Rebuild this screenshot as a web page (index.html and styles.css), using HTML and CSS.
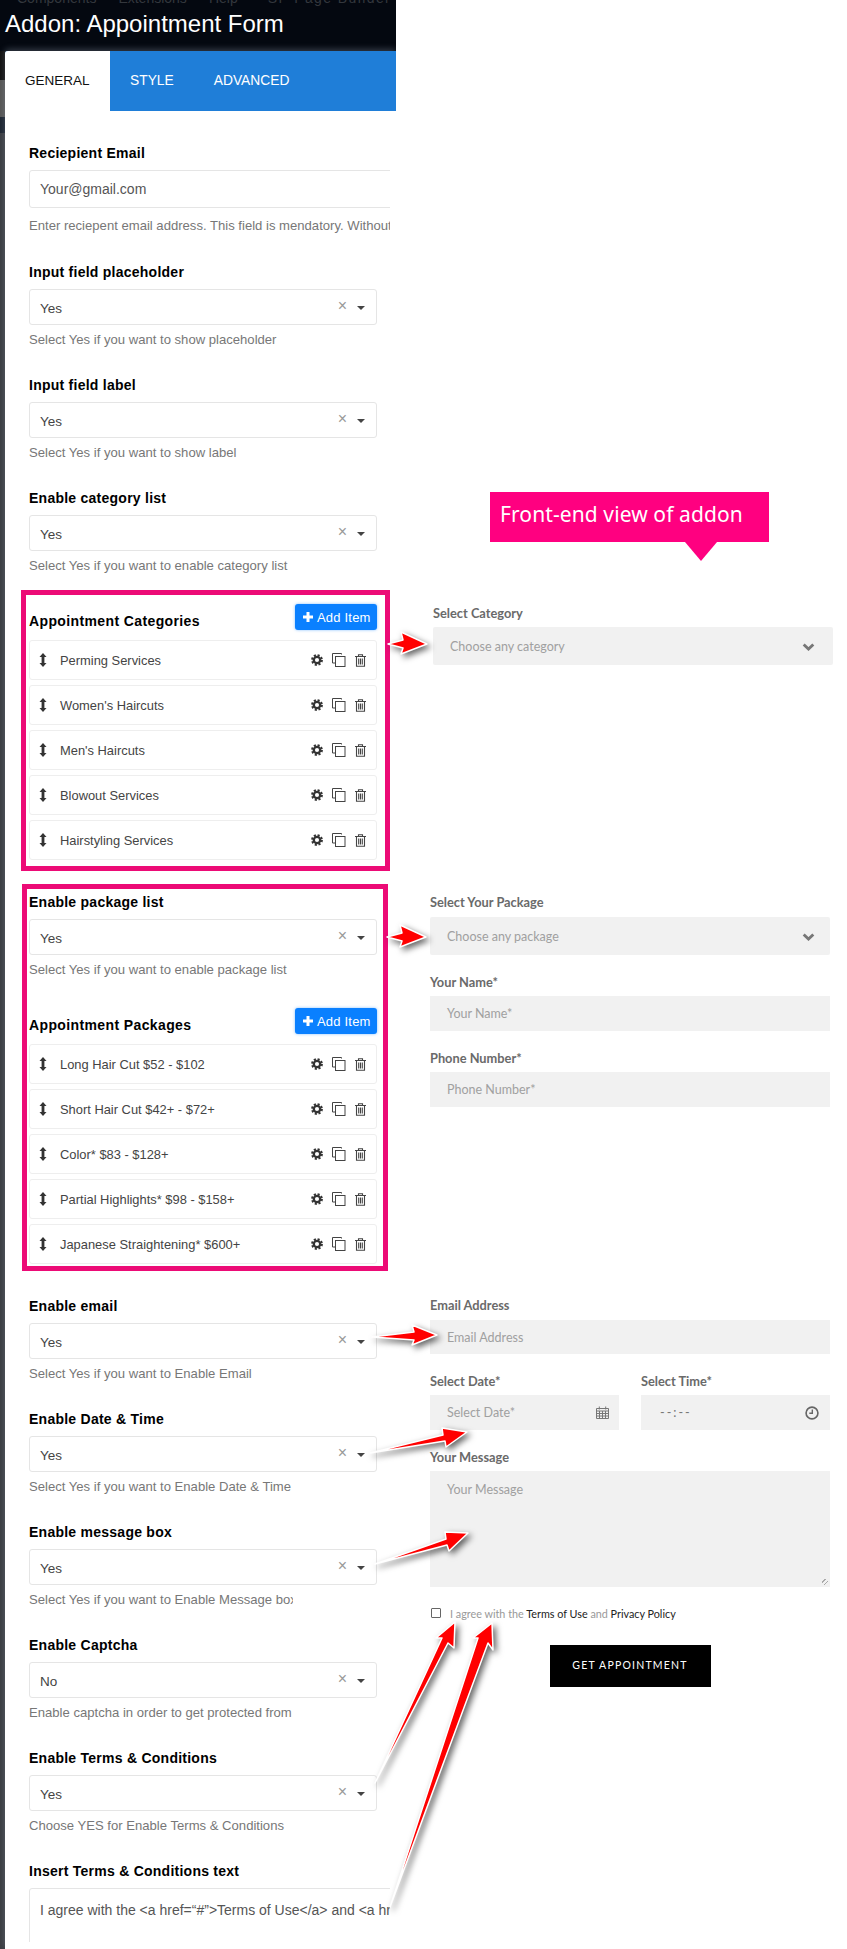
FILE: index.html
```html
<!DOCTYPE html>
<html lang="en">
<head>
<meta charset="utf-8">
<title>Addon: Appointment Form</title>
<link rel="stylesheet" href="styles.css">
</head>
<body>
<svg class="defs" width="0" height="0" aria-hidden="true">
  <symbol id="i-drag" viewBox="0 0 8 14"><path d="M4 0 7.500 4H5.400v6H7.500L4 14 .5 10H2.600V4H.5Z" fill="#333"/></symbol>
  <symbol id="i-gear" viewBox="0 0 12 12"><circle cx="6" cy="6" r="3.200" fill="none" stroke="#333" stroke-width="2.300"/><circle cx="6" cy="6" r="4.900" fill="none" stroke="#333" stroke-width="2" stroke-dasharray="2.100 1.750"/></symbol>
  <symbol id="i-copy" viewBox="0 0 14 14"><path d="M9.500 1.500V.5H.5v9.500h2.500" fill="none" stroke="#444"/><rect x="3.500" y="3.500" width="9.500" height="10" fill="#fff" stroke="#444"/></symbol>
  <symbol id="i-trash" viewBox="0 0 11 13"><path d="M0 2.500h11M3.500 2.500V.7h4v1.800M1.500 2.500v9.800h8V2.500M3.700 4.500v6M5.500 4.500v6M7.300 4.500v6" fill="none" stroke="#444" stroke-width="1.100"/></symbol>
  <symbol id="i-plus" viewBox="0 0 10 10"><path d="M3.500 0h3v3.500H10v3H6.500V10h-3V6.500H0v-3h3.500Z" fill="#fff"/></symbol>
  <symbol id="i-chev" viewBox="0 0 11 7"><path d="M1.300 1.300 5.500 5.300 9.700 1.300" fill="none" stroke="#777" stroke-width="2.500"/></symbol>
  <symbol id="i-cal" viewBox="0 0 13 13"><path d="M.5 2.500h12v10H.5ZM.5 5h12M3.500 5v7.500M6.500 5v7.500M9.500 5v7.500M.5 7.500h12M.5 10h12M3.300 .5v3M9.700 .5v3" fill="none" stroke="#777"/></symbol>
  <symbol id="i-clock" viewBox="0 0 13 13"><circle cx="6.500" cy="6.500" r="5.500" fill="none" stroke="#666" stroke-width="1.500"/><path d="M6.800 3.200v3.600H4" fill="none" stroke="#666" stroke-width="1.300"/></symbol>
</svg>

<div class="page">
  <div class="panel">
    <header class="topbar">
      <nav class="topnav"><span>Components</span><span>Extensions</span><span>Help</span><span class="topnav-last">SP Page Builder</span></nav>
      <h1 class="title">Addon: Appointment Form</h1>
    </header>
    <div class="card">
      <div class="tabs">
        <span class="tab tab-active">GENERAL</span>
        <span class="tab">STYLE</span>
        <span class="tab">ADVANCED</span>
      </div>
      <div class="form">
        <div class="field">
          <div class="label">Reciepient Email</div>
          <div class="text-input">Your@gmail.com</div>
          <div class="help help-wide">Enter reciepent email address. This field is mendatory. Without this field the form will not work</div>
        </div>
        <div class="field">
          <div class="label">Input field placeholder</div>
          <div class="select"><span class="select-value">Yes</span><span class="clear">×</span><span class="caret"></span></div>
          <div class="help">Select Yes if you want to show placeholder</div>
        </div>
        <div class="field">
          <div class="label">Input field label</div>
          <div class="select"><span class="select-value">Yes</span><span class="clear">×</span><span class="caret"></span></div>
          <div class="help">Select Yes if you want to show label</div>
        </div>
        <div class="field field-last">
          <div class="label">Enable category list</div>
          <div class="select"><span class="select-value">Yes</span><span class="clear">×</span><span class="caret"></span></div>
          <div class="help">Select Yes if you want to enable category list</div>
        </div>

        <section class="box box-cat">
          <div class="list-head">
            <div class="label label-flush">Appointment Categories</div>
            <span class="add-btn"><svg class="add-icon"><use href="#i-plus"/></svg>Add Item</span>
          </div>
          <div class="rows">
            <div class="row"><svg class="drag"><use href="#i-drag"/></svg><span class="row-text">Perming Services</span><svg class="gear"><use href="#i-gear"/></svg><svg class="copy"><use href="#i-copy"/></svg><svg class="trash"><use href="#i-trash"/></svg></div>
            <div class="row"><svg class="drag"><use href="#i-drag"/></svg><span class="row-text">Women's Haircuts</span><svg class="gear"><use href="#i-gear"/></svg><svg class="copy"><use href="#i-copy"/></svg><svg class="trash"><use href="#i-trash"/></svg></div>
            <div class="row"><svg class="drag"><use href="#i-drag"/></svg><span class="row-text">Men's Haircuts</span><svg class="gear"><use href="#i-gear"/></svg><svg class="copy"><use href="#i-copy"/></svg><svg class="trash"><use href="#i-trash"/></svg></div>
            <div class="row"><svg class="drag"><use href="#i-drag"/></svg><span class="row-text">Blowout Services</span><svg class="gear"><use href="#i-gear"/></svg><svg class="copy"><use href="#i-copy"/></svg><svg class="trash"><use href="#i-trash"/></svg></div>
            <div class="row"><svg class="drag"><use href="#i-drag"/></svg><span class="row-text">Hairstyling Services</span><svg class="gear"><use href="#i-gear"/></svg><svg class="copy"><use href="#i-copy"/></svg><svg class="trash"><use href="#i-trash"/></svg></div>
          </div>
        </section>

        <section class="box box-pack">
          <div class="label">Enable package list</div>
          <div class="select"><span class="select-value">Yes</span><span class="clear">×</span><span class="caret"></span></div>
          <div class="help">Select Yes if you want to enable package list</div>
          <div class="list-head list-head-spaced">
            <div class="label label-flush">Appointment Packages</div>
            <span class="add-btn"><svg class="add-icon"><use href="#i-plus"/></svg>Add Item</span>
          </div>
          <div class="rows">
            <div class="row"><svg class="drag"><use href="#i-drag"/></svg><span class="row-text">Long Hair Cut $52 - $102</span><svg class="gear"><use href="#i-gear"/></svg><svg class="copy"><use href="#i-copy"/></svg><svg class="trash"><use href="#i-trash"/></svg></div>
            <div class="row"><svg class="drag"><use href="#i-drag"/></svg><span class="row-text">Short Hair Cut $42+ - $72+</span><svg class="gear"><use href="#i-gear"/></svg><svg class="copy"><use href="#i-copy"/></svg><svg class="trash"><use href="#i-trash"/></svg></div>
            <div class="row"><svg class="drag"><use href="#i-drag"/></svg><span class="row-text">Color* $83 - $128+</span><svg class="gear"><use href="#i-gear"/></svg><svg class="copy"><use href="#i-copy"/></svg><svg class="trash"><use href="#i-trash"/></svg></div>
            <div class="row"><svg class="drag"><use href="#i-drag"/></svg><span class="row-text">Partial Highlights* $98 - $158+</span><svg class="gear"><use href="#i-gear"/></svg><svg class="copy"><use href="#i-copy"/></svg><svg class="trash"><use href="#i-trash"/></svg></div>
            <div class="row"><svg class="drag"><use href="#i-drag"/></svg><span class="row-text">Japanese Straightening* $600+</span><svg class="gear"><use href="#i-gear"/></svg><svg class="copy"><use href="#i-copy"/></svg><svg class="trash"><use href="#i-trash"/></svg></div>
          </div>
        </section>

        <div class="after-box">
          <div class="field">
            <div class="label">Enable email</div>
            <div class="select"><span class="select-value">Yes</span><span class="clear">×</span><span class="caret"></span></div>
            <div class="help help-cut">Select Yes if you want to Enable Email</div>
          </div>
          <div class="field">
            <div class="label">Enable Date &amp; Time</div>
            <div class="select"><span class="select-value">Yes</span><span class="clear">×</span><span class="caret"></span></div>
            <div class="help help-cut">Select Yes if you want to Enable Date &amp; Time</div>
          </div>
          <div class="field">
            <div class="label">Enable message box</div>
            <div class="select"><span class="select-value">Yes</span><span class="clear">×</span><span class="caret"></span></div>
            <div class="help help-cut">Select Yes if you want to Enable Message box</div>
          </div>
          <div class="field">
            <div class="label">Enable Captcha</div>
            <div class="select"><span class="select-value">No</span><span class="clear">×</span><span class="caret"></span></div>
            <div class="help help-cut">Enable captcha in order to get protected from</div>
          </div>
          <div class="field">
            <div class="label">Enable Terms &amp; Conditions</div>
            <div class="select"><span class="select-value">Yes</span><span class="clear">×</span><span class="caret"></span></div>
            <div class="help help-cut">Choose YES for Enable Terms &amp; Conditions</div>
          </div>
          <div class="field">
            <div class="label">Insert Terms &amp; Conditions text</div>
            <div class="text-area">I agree with the &lt;a href=“#”&gt;Terms of Use&lt;/a&gt; and &lt;a href=“#”&gt;Privacy Policy&lt;/a&gt;</div>
          </div>
        </div>
      </div>
    </div>
  </div>

  <main class="preview">
    <div class="banner">Front-end view of addon</div>

    <div class="fe-group fe-group-cat">
      <div class="fe-label">Select Category</div>
      <div class="fe-input fe-select"><span>Choose any category</span><svg class="chev"><use href="#i-chev"/></svg></div>
    </div>

    <div class="fe-group fe-group-pack">
      <div class="fe-label">Select Your Package</div>
      <div class="fe-input fe-select fe-select-pack"><span>Choose any package</span><svg class="chev"><use href="#i-chev"/></svg></div>
      <div class="fe-label fe-spaced">Your Name*</div>
      <div class="fe-input">Your Name*</div>
      <div class="fe-label fe-spaced">Phone Number*</div>
      <div class="fe-input">Phone Number*</div>
    </div>

    <div class="fe-group fe-group-contact">
      <div class="fe-label">Email Address</div>
      <div class="fe-input fe-short">Email Address</div>
      <div class="fe-cols fe-spaced">
        <div class="fe-col">
          <div class="fe-label">Select Date*</div>
          <div class="fe-input fe-between"><span>Select Date*</span><svg class="cal"><use href="#i-cal"/></svg></div>
        </div>
        <div class="fe-col">
          <div class="fe-label">Select Time*</div>
          <div class="fe-input fe-between fe-time"><span>--:--</span><svg class="clock"><use href="#i-clock"/></svg></div>
        </div>
      </div>
      <div class="fe-label fe-spaced">Your Message</div>
      <div class="fe-textarea">Your Message</div>
      <div class="fe-check">
        <span class="checkbox"></span>
        <span>I agree with the <a class="fe-link" href="#">Terms of Use</a> and <a class="fe-link" href="#">Privacy Policy</a></span>
      </div>
      <div class="fe-submit"><span class="submit-btn">GET APPOINTMENT</span></div>
    </div>
  </main>

  <svg class="arrows" width="847" height="1949" viewBox="0 0 847 1949" aria-hidden="true">
    <path d="M388 644 403 640 401 632 427 644 401 654 403 648Z"/>
    <path d="M387 937 402 933 400 925 426 937 400 947 402 941Z"/>
    <path d="M372 1337 414 1332 412 1325 437 1335 412 1345 414 1340Z"/>
    <path d="M370 1453 443 1435 442 1428 467 1432 446 1447 445 1441Z"/>
    <path d="M375 1564 446 1539 445 1532 468 1533 449 1551 447 1545Z"/>
    <path d="M375 1783 442 1638 436 1638 455 1622 454 1648 448 1643Z"/>
    <path d="M390 1907 478 1638 473 1638 492 1623 493 1650 488 1643Z"/>
  </svg>
</div>
</body>
</html>
```
FILE: styles.css
```css
* { box-sizing: border-box; }
html, body { margin: 0; padding: 0; background: #fff; }
body { font-family: "Liberation Sans", Arial, sans-serif; color: #000; }
.defs { position: absolute; }
.page { position: relative; display: flex; width: 847px; height: 1949px; overflow: hidden; background: #fff; }

/* Left: admin panel */
.panel { width: 396px; flex: none; overflow: hidden; background: linear-gradient(#111 0, #111 80px, #555 80px, #555 117px, #1c2530 117px, #1c2530 133px, #3a3d42 133px); }
.topbar { height: 51px; background: #040810; overflow: hidden; }
.topnav { display: flex; height: 12px; margin-top: -3px; padding-left: 17px; gap: 22px; font-size: 14px; color: #33373d; line-height: 2px; }
.topnav-last { margin-left: 8px; letter-spacing: 1.400px; }
.title { margin: 0; padding-left: 5px; font-weight: 400; font-size: 24px; line-height: 30px; color: #fff; }
.card { margin-left: 5px; height: 1898px; background: #fff; border-top-left-radius: 3px; box-shadow: 0 -2px 6px rgba(200, 215, 235, .25); }
.tabs { display: flex; height: 60px; background: #1f7ed8; border-top-left-radius: 3px; }
.tab { padding: 0 20px; font-size: 13.800px; line-height: 60px; color: #fff; }
.tab-active { width: 105px; background: #fff; color: #111; font-size: 13.500px; border-top-left-radius: 3px; }
.form { width: 385px; height: 1831px; padding: 32px 0 0 24px; overflow: hidden; }
.field { margin-bottom: 26px; }
.field-last { margin-bottom: 15px; }
.label { font-size: 14px; font-weight: 700; line-height: 20px; margin-bottom: 7px; color: #000; letter-spacing: .25px; }
.label-flush { margin-bottom: 0; }
.text-input { width: 380px; height: 38px; padding: 0 10px; border: 1px solid #e5e5e5; border-radius: 3px; font-size: 14px; line-height: 36px; color: #555; }
.help { margin-top: 6px; width: 348px; font-size: 13.100px; line-height: 18px; color: #777; white-space: nowrap; overflow: hidden; }
.help-wide { width: 361px; margin-top: 9px; margin-bottom: 27px; }
.help-cut { width: 264px; }
.select { display: flex; align-items: center; width: 348px; height: 36px; padding: 0 11px 0 10px; border: 1px solid #e5e5e5; border-radius: 3px; }
.select-value { flex: 1; font-size: 13.500px; padding-top: 2px; color: #444; }
.clear { font-size: 16px; line-height: 16px; color: #999; margin-right: 10px; margin-top: -3px; }
.caret { width: 0; height: 0; border-left: 4px solid transparent; border-right: 4px solid transparent; border-top: 4px solid #444; margin-top: 1px; }

.box { border: 5px solid #ec0b76; }
.box-cat { width: 369px; margin-left: -8px; padding: 9px 8px 6px 3px; }
.box-pack { width: 366px; margin-top: 13px; margin-left: -7px; padding: 3px 5px 2px 2px; }
.list-head { display: flex; justify-content: space-between; align-items: flex-end; width: 348px; height: 26px; }
.list-head-spaced { margin-top: 29px; }
.list-head .label { line-height: 18px; margin-bottom: 0; letter-spacing: .38px; }
.add-btn { display: flex; align-items: center; width: 82px; height: 26px; padding-left: 8px; background: #0a80ff; border-radius: 3px; box-shadow: 0 0 3px rgba(10, 128, 255, .5); color: #fff; font-size: 13px; letter-spacing: .2px; }
.add-icon { width: 10px; height: 10px; margin-right: 4px; }
.rows { display: flex; flex-direction: column; gap: 5px; margin-top: 10px; width: 348px; }
.row { display: flex; align-items: center; height: 40px; border: 1px solid #eee; border-radius: 3px; padding-left: 9px; }
.drag { width: 8px; height: 14px; margin-right: 13px; flex: none; }
.row-text { flex: 1; font-size: 12.900px; color: #444; }
.gear { width: 12px; height: 12px; margin-right: 9px; }
.copy { width: 14px; height: 14px; margin-right: 9px; }
.trash { width: 11px; height: 13px; margin-right: 10px; }
.after-box { margin-top: 25px; }
.text-area { width: 380px; height: 100px; padding: 11px 10px; border: 1px solid #e5e5e5; border-radius: 3px; font-size: 14px; line-height: 20px; color: #555; white-space: nowrap; overflow: hidden; }

/* Right: front-end preview */
.preview { flex: 1; padding-top: 492px; font-family: Lato, "Liberation Sans", sans-serif; }
.banner { position: relative; width: 279px; height: 50px; margin-left: 94px; padding-left: 10px; background: #ff0080; color: #fff; font-family: "Noto Sans", sans-serif; font-size: 21px; letter-spacing: .1px; line-height: 44px; }
.banner::after { content: ""; position: absolute; left: 195px; top: 50px; border-left: 16px solid transparent; border-right: 16px solid transparent; border-top: 19px solid #ff0080; }
.fe-group { width: 400px; }
.fe-group-cat { margin: 62px 0 0 37px; }
.fe-group-pack { margin: 228px 0 0 34px; }
.fe-group-contact { margin: 189px 0 0 34px; }
.fe-label { font-size: 12.800px; font-weight: 700; line-height: 18px; margin-bottom: 5px; color: #6a6a6a; }
.fe-spaced { margin-top: 18px; }
.fe-input { display: flex; align-items: center; height: 35px; padding: 0 17px; background: #f1f1f1; font-size: 12.500px; color: #a0a0a0; }
.fe-short { height: 34px; margin-top: 6px; }
.fe-select { justify-content: space-between; height: 38px; padding-right: 18px; border-radius: 2px; }
.fe-select-pack { margin-top: 6px; padding-right: 15px; }
.fe-between { justify-content: space-between; }
.fe-time { padding: 0 11px 0 19px; color: #777; letter-spacing: 2px; }
.chev { width: 13px; height: 8px; margin-top: 1px; }
.cal { width: 13px; height: 13px; margin-right: -7px; }
.clock { width: 14px; height: 14px; margin-top: 1px; }
.fe-cols { display: flex; gap: 22px; }
.fe-col { flex: 1; min-width: 0; }
.fe-textarea { position: relative; height: 116px; padding: 10px 17px; background: #f1f1f1; font-size: 12.500px; line-height: 18px; color: #a0a0a0; }
.fe-textarea::after { content: ""; position: absolute; right: 2px; bottom: 2px; width: 6px; height: 6px; background: repeating-linear-gradient(135deg, transparent 0, transparent 2px, #aaa 2px, #aaa 3px); }
.fe-check { display: flex; align-items: center; gap: 9px; height: 18px; margin-top: 17px; padding-left: 1px; font-size: 10.800px; color: #999; }
.checkbox { width: 10px; height: 10px; border: 1px solid #666; border-radius: 1px; }
.fe-link { color: #222; text-decoration: none; }
.fe-submit { display: flex; justify-content: center; margin-top: 23px; }
.submit-btn { width: 161px; height: 42px; background: #000; color: #fff; font-size: 10.500px; font-weight: 400; line-height: 40px; letter-spacing: 1.200px; text-align: center; }

/* Overlay annotation arrows */
.arrows { position: absolute; left: 0; top: 0; pointer-events: none; filter: drop-shadow(3px 3px 3px rgba(0, 0, 0, .6)); }
.arrows path { fill: #f00; stroke: #fff; stroke-width: 1.500px; stroke-linejoin: round; }
```
